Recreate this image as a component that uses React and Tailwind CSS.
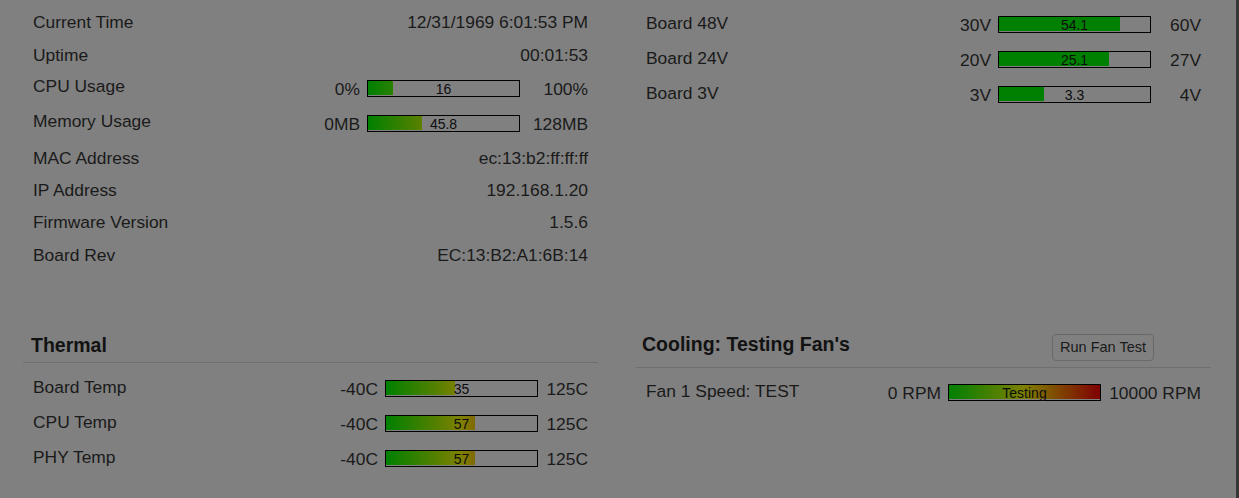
import React from "react";

const GRAD = "bg-[linear-gradient(to_right,#008000,#808000,#800000)]";

function Bar({ pct, label, solid }) {
  return (
    <div className="relative w-[153px] h-[17px] border border-black shrink-0">
      <div className="h-full pb-[1px] overflow-hidden" style={{ width: pct + "%" }}>
        <div className={"h-full w-[151px] " + (solid ? "bg-[#008000]" : GRAD)} />
      </div>
      <span className="absolute inset-0 flex items-center justify-center text-[14px] leading-none text-[#0d0d0d]">
        {label}
      </span>
    </div>
  );
}

function TextRow({ h, label, value }) {
  return (
    <div className={"flex items-center justify-between " + h}>
      <span>{label}</span>
      <span>{value}</span>
    </div>
  );
}

function BarRow({ h, label, min, max, pct, val, solid, maxW, shift }) {
  return (
    <div className={"flex items-center " + h}>
      <span className={"flex-1 " + shift}>{label}</span>
      <span>{min}</span>
      <div className="ml-[7px]">
        <Bar pct={pct} label={val} solid={solid} />
      </div>
      <span className={"text-right " + maxW}>{max}</span>
    </div>
  );
}

export default function App() {
  return (
    <div className="w-[1239px] h-[498px] bg-[#808080] flex overflow-hidden font-['Liberation_Sans',Arial,sans-serif] text-[17.4px] leading-[20px] text-[#1a1a1a]">
      <div className="w-[1236px] px-[23px]">
        {/* top section */}
        <div className="grid grid-cols-[575px_575px] gap-x-[38px] pt-[6px]">
          <div className="px-[10px]">
            <TextRow h="h-[32px]" label="Current Time" value="12/31/1969 6:01:53 PM" />
            <TextRow h="h-[33px]" label="Uptime" value="00:01:53" />
            <BarRow h="h-[35px]" shift="mb-[5px]" label="CPU Usage" min="0%" max="100%" pct={16.5} val="16" maxW="w-[68px]" />
            <BarRow h="h-[35px]" shift="mb-[5px]" label="Memory Usage" min="0MB" max="128MB" pct={35.8} val="45.8" maxW="w-[68px]" />
            <TextRow h="h-[33px]" label="MAC Address" value="ec:13:b2:ff:ff:ff" />
            <TextRow h="h-[32px]" label="IP Address" value="192.168.1.20" />
            <TextRow h="h-[32px]" label="Firmware Version" value="1.5.6" />
            <TextRow h="h-[33px]" label="Board Rev" value="EC:13:B2:A1:6B:14" />
          </div>
          <div className="px-[10px] mt-[1px]">
            <BarRow h="h-[35px]" shift="mb-[4px]" label="Board 48V" min="30V" max="60V" pct={80.3} val="54.1" solid maxW="w-[50px]" />
            <BarRow h="h-[35px]" shift="mb-[4px]" label="Board 24V" min="20V" max="27V" pct={72.9} val="25.1" solid maxW="w-[50px]" />
            <BarRow h="h-[35px]" shift="mb-[4px]" label="Board 3V" min="3V" max="4V" pct={30} val="3.3" solid maxW="w-[50px]" />
          </div>
        </div>

        {/* bottom section */}
        <div className="grid grid-cols-[575px_575px] gap-x-[38px] mt-[61px]">
          <div>
            <div className="pt-[1px] pb-[5px] pl-[8px] border-b border-[#6f6f6f]">
              <h2 className="text-[19.5px] leading-[24px] font-bold text-[#121212]">Thermal</h2>
            </div>
            <div className="px-[10px] mt-[8px]">
              <BarRow h="h-[35px]" shift="mb-[4px]" label="Board Temp" min="-40C" max="125C" pct={45.5} val="35" maxW="w-[50px]" />
              <BarRow h="h-[35px]" shift="mb-[4px]" label="CPU Temp" min="-40C" max="125C" pct={58.8} val="57" maxW="w-[50px]" />
              <BarRow h="h-[35px]" shift="mb-[4px]" label="PHY Temp" min="-40C" max="125C" pct={58.8} val="57" maxW="w-[50px]" />
            </div>
          </div>
          <div>
            <div className="flex items-start pb-[6px] pl-[6px] border-b border-[#6f6f6f]">
              <h2 className="text-[19.5px] leading-[24px] font-bold text-[#121212]">Cooling: Testing Fan's</h2>
              <button className="ml-auto mr-[57px] mt-[2px] h-[27px] px-[7px] flex items-center border border-[#696969] rounded-[4px] text-[14.5px] leading-none text-[#1a1a1a] bg-[#808080]">
                Run Fan Test
              </button>
            </div>
            <div className="px-[10px] mt-[7px]">
              <BarRow h="h-[35px]" shift="mb-[4px]" label="Fan 1 Speed: TEST" min="0 RPM" max="10000 RPM" pct={100} val="Testing" maxW="w-[100px]" />
            </div>
          </div>
        </div>
      </div>
      <div className="w-[3px] h-full bg-[#363636]" />
    </div>
  );
}
